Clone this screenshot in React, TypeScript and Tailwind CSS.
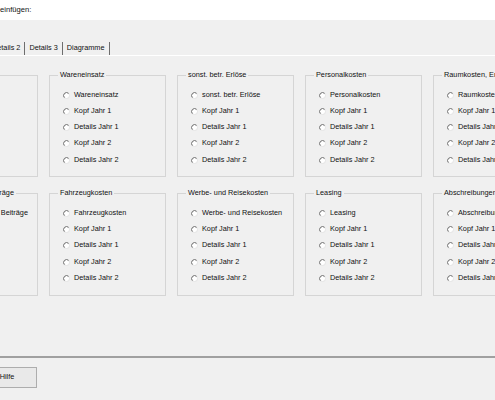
const font = { fontFamily: '"Liberation Sans", Arial, sans-serif' }

interface Group {
  title: string
  first: string
}

const row1: Group[] = [
  { title: "Umsatzerlöse", first: "Umsatzerlöse" },
  { title: "Wareneinsatz", first: "Wareneinsatz" },
  { title: "sonst. betr. Erlöse", first: "sonst. betr. Erlöse" },
  { title: "Personalkosten", first: "Personalkosten" },
  { title: "Raumkosten, Energie", first: "Raumkosten, Energie" },
]

const row2: Group[] = [
  { title: "Versicherungen, Beiträge", first: "Versicherungen, Beiträge" },
  { title: "Fahrzeugkosten", first: "Fahrzeugkosten" },
  { title: "Werbe- und Reisekosten", first: "Werbe- und Reisekosten" },
  { title: "Leasing", first: "Leasing" },
  { title: "Abschreibungen", first: "Abschreibungen" },
]

function Radio() {
  return (
    <svg width="7" height="7" viewBox="0 0 7 7" className="shrink-0">
      <circle cx="3.5" cy="3.5" r="3" fill="#ffffff" stroke="#e3e3e3" strokeWidth="1" />
      <path d="M1.38 5.62 A3 3 0 0 1 5.62 1.38" fill="none" stroke="#6e6e6e" strokeWidth="1" />
    </svg>
  )
}

function GroupBox({ group }: { group: Group }) {
  const items = [group.first, "Kopf Jahr 1", "Details Jahr 1", "Kopf Jahr 2", "Details Jahr 2"]
  return (
    <fieldset className="w-[117px] border border-[#d5d5d5] pl-[13px] pb-[8px] whitespace-nowrap overflow-hidden">
      <legend className="ml-[-5px] px-[2px] leading-[10px]">{group.title}</legend>
      <div className="flex flex-col pt-[7px]">
        {items.map((label, i) => (
          <div key={i} className="flex items-center gap-[4px] h-[16.25px]">
            <Radio />
            <span>{label}</span>
          </div>
        ))}
      </div>
    </fieldset>
  )
}

export default function App() {
  const tabs = ["Details 2", "Details 3", "Diagramme"]
  return (
    <div className="w-[495px] h-[400px] overflow-hidden bg-[#f0f0f0] text-[7.3px] text-[#111]" style={font}>
      {/* header strip */}
      <div className="h-[20px] bg-white flex items-center">
        <span className="text-[7.6px]">einfügen:</span>
      </div>

      {/* tab strip */}
      <div className="mt-[22px] h-[13px] flex items-stretch ml-[-12px]">
        {tabs.map((t) => (
          <div key={t} className="flex items-center px-[4px] border-r border-[#6e6e6e]">
            {t}
          </div>
        ))}
      </div>

      {/* tab page */}
      <div className="border-t border-white">
        <div className="mt-[14px] ml-[-79px] grid grid-cols-[repeat(5,117px)] gap-x-[11px] gap-y-[11px]">
          {row1.map((g) => (
            <GroupBox key={g.title} group={g} />
          ))}
          {row2.map((g) => (
            <GroupBox key={g.title} group={g} />
          ))}
        </div>
      </div>

      {/* bottom divider */}
      <div className="mt-[60px] border-t-2 border-[#a0a0a0]" />

      <div className="mt-[9px] flex">
        <button className="ml-[-23px] w-[60px] h-[21px] border border-[#adadad] bg-[#e9e9e9] text-center" style={font}>
          Hilfe
        </button>
      </div>
    </div>
  )
}
